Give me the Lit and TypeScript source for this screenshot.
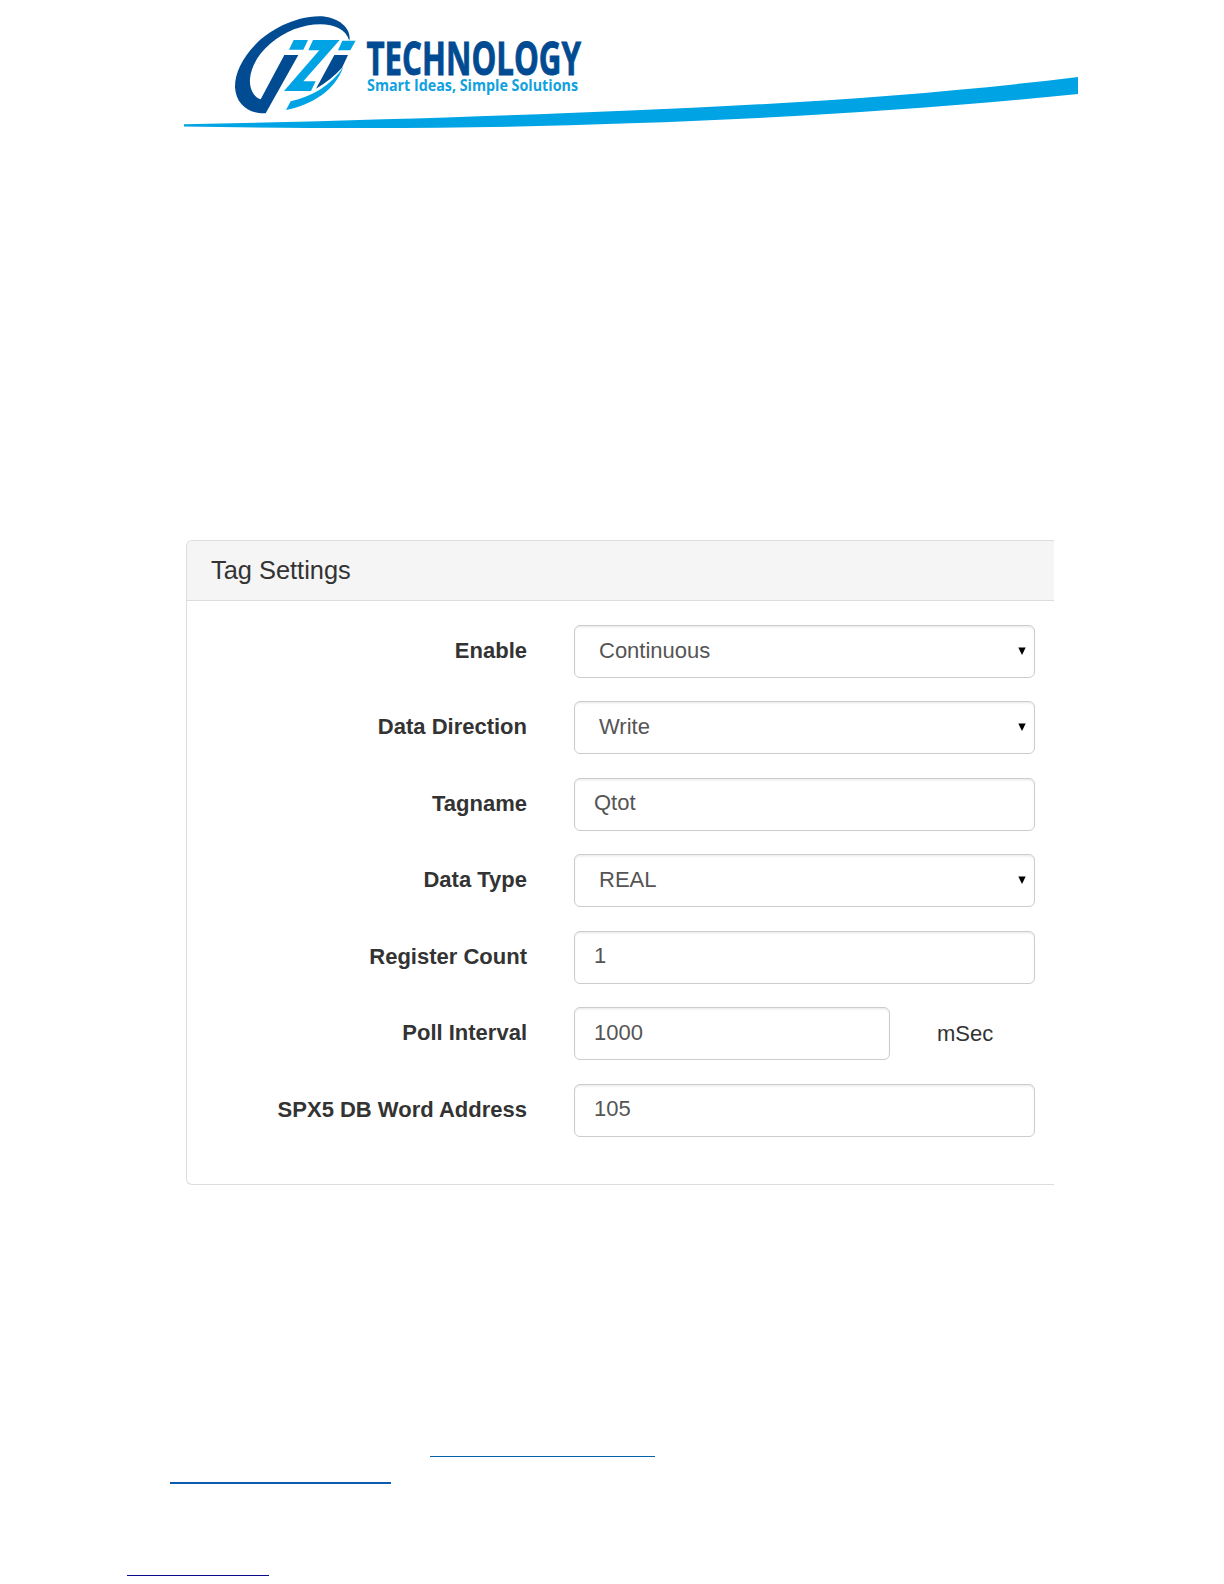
import { LitElement, html, svg, css, nothing } from 'lit';
import { customElement, property } from 'lit/decorators.js';

interface Field {
  label: string;
  value: string;
  kind: 'select' | 'text';
  unit?: string;
}

const FIELDS: Field[] = [
  { label: 'Enable', value: 'Continuous', kind: 'select' },
  { label: 'Data Direction', value: 'Write', kind: 'select' },
  { label: 'Tagname', value: 'Qtot', kind: 'text' },
  { label: 'Data Type', value: 'REAL', kind: 'select' },
  { label: 'Register Count', value: '1', kind: 'text' },
  { label: 'Poll Interval', value: '1000', kind: 'text', unit: 'mSec' },
  { label: 'SPX5 DB Word Address', value: '105', kind: 'text' },
];

@customElement('page-banner')
export class PageBanner extends LitElement {
  static styles = css`
    :host {
      display: block;
      height: 140px;
    }

    svg {
      display: block;
    }

    .navy {
      fill: #004b91;
    }

    .sky {
      fill: #00a3e4;
    }

    .name {
      font: 700 46px 'Open Sans', sans-serif;
      fill: #004b91;
      stroke: #004b91;
      stroke-width: 0.9px;
    }

    .tagline {
      font: 700 15.4px 'Open Sans', sans-serif;
      fill: #12a1df;
    }
  `;

  emblem() {
    return svg`
      <g transform="translate(220 0) scale(0.33333)">
        <path class="navy" d="M388 122 C396 84 352 49 298 49 C220 50 146 92 105 135 C66 175 44 222 45 262 C48 312 84 342 137 340 L235 165 H193 L122 298 C98 290 88 262 90 236 C96 170 160 112 222 88 C290 62 372 66 388 122 Z" />
        <path class="sky" d="M221 120 H264 L250 149 H207 Z" />
        <path class="sky" d="M279 120 H359 L250 244 H287 L273 273 H192 L298 151 H265 Z" />
        <path class="sky" d="M367 122 H407 L391 151 H354 Z" />
        <path class="navy" d="M343 165 H384 L366 203 C345 226 318 248 288 266 Z" />
        <path class="sky" d="M370 201 C335 255 275 290 212 304 L198 330 C275 315 345 272 370 201 Z" />
      </g>
    `;
  }

  render() {
    return html`
      <svg width="1224" height="140" viewBox="0 0 1224 140">
        ${this.emblem()}
        <text class="name" x="366.5" y="75" textLength="214.5" lengthAdjust="spacingAndGlyphs">TECHNOLOGY</text>
        <text class="tagline" x="367" y="91" textLength="211" lengthAdjust="spacingAndGlyphs">Smart Ideas, Simple Solutions</text>
        <path class="sky" d="M184 124.3 C340 121 480 117 630 110.5 C790 104 940 94 1078 77 V94 C940 108 790 118 630 123.3 C480 129 340 129 184 126.5 Z" />
      </svg>
    `;
  }
}

@customElement('field-row')
export class FieldRow extends LitElement {
  @property({ attribute: false }) field!: Field;

  static styles = css`
    :host {
      display: grid;
      grid-template-columns: 340px 461px;
      column-gap: 47px;
      align-items: center;
      height: 53px;
      font: 22px 'Liberation Sans', Arial, sans-serif;
      color: #333;
    }

    .label {
      padding-bottom: 1px;
      font-weight: 700;
      text-align: right;
      white-space: nowrap;
    }

    .controls {
      display: flex;
      align-items: center;
    }

    .control {
      box-sizing: border-box;
      flex: 1;
      display: flex;
      align-items: center;
      justify-content: space-between;
      height: 53px;
      padding: 0 8px 2px 19px;
      border: 1.5px solid #ccc;
      border-radius: 6px;
      box-shadow: inset 0 1.5px 1.5px rgba(0, 0, 0, 0.075);
      color: #555;
    }

    .select {
      padding-left: 24px;
    }

    .short {
      flex: 0 0 316px;
    }

    .unit {
      margin-left: 47px;
    }
  `;

  render() {
    const { label, value, kind, unit } = this.field;
    return html`
      <div class="label">${label}</div>
      <div class="controls">
        <div class="control ${kind} ${unit ? 'short' : ''}">
          <span>${value}</span>
          ${kind === 'select'
            ? html`<svg width="8" height="8" viewBox="0 0 8 8"><path d="M0.3 0.5 H7.7 L4 8 Z" /></svg>`
            : nothing}
        </div>
        ${unit ? html`<span class="unit">${unit}</span>` : nothing}
      </div>
    `;
  }
}

@customElement('app-root')
export class AppRoot extends LitElement {
  static styles = css`
    :host {
      display: flex;
      flex-direction: column;
      box-sizing: border-box;
      width: 1224px;
      height: 1584px;
      overflow: hidden;
      background: #fff;
    }

    .panel {
      box-sizing: border-box;
      width: 868px;
      height: 645px;
      margin: 400px 0 0 186px;
      border: 1.5px solid #ddd;
      border-right: none;
      border-radius: 6px 0 0 6px;
      overflow: hidden;
    }

    .title {
      box-sizing: border-box;
      height: 60px;
      padding-left: 24px;
      border-bottom: 1.5px solid #ddd;
      background: #f5f5f5;
      font: 25.4px/59px 'Liberation Sans', Arial, sans-serif;
      color: #333;
    }

    .fields {
      display: flex;
      flex-direction: column;
      gap: 23.45px;
      padding-top: 24px;
    }

    .links {
      display: flex;
      flex-direction: column;
    }

    .rule {
      height: 1px;
      background: #0563a8;
    }

    .first {
      width: 225px;
      margin: 271px 0 0 430px;
    }

    .second {
      width: 221px;
      height: 2px;
      margin: 25px 0 0 170px;
      background: #0b5cb0;
    }

    .third {
      width: 142px;
      margin: 91px 0 0 127px;
      background: #0a0a8c;
    }
  `;

  render() {
    return html`
      <page-banner></page-banner>
      <section class="panel">
        <div class="title">Tag Settings</div>
        <div class="fields">
          ${FIELDS.map(field => html`<field-row .field=${field}></field-row>`)}
        </div>
      </section>
      <div class="links">
        <div class="rule first"></div>
        <div class="rule second"></div>
        <div class="rule third"></div>
      </div>
    `;
  }
}
